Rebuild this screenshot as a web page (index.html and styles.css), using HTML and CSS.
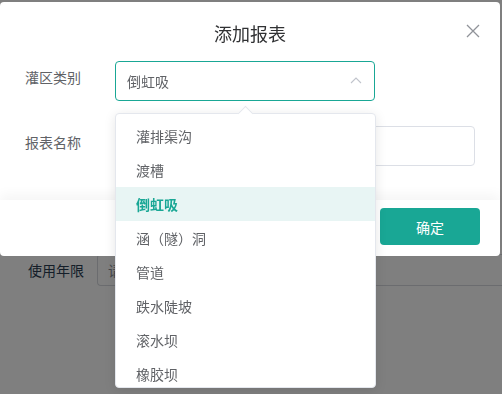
FILE: index.html
```html
<!DOCTYPE html>
<html lang="zh-CN">
<head>
  <meta charset="UTF-8">
  <title>添加报表</title>
  <link rel="stylesheet" href="styles.css">
</head>
<body>

  <div class="page">
    <div class="page-row">
      <label class="page-label">使用年限</label>
      <input class="page-input" type="text" placeholder="请输入使用年限">
    </div>
  </div>

  <div class="mask"></div>

  <div class="dialog">
    <div class="dialog-header">
      <span class="dialog-title">添加报表</span>
      <button class="dialog-close" title="关闭">
        <svg width="14" height="14" viewBox="0 0 14 14">
          <path d="M1 1L13 13M13 1L1 13" stroke="#909399" stroke-width="1.3" fill="none"/>
        </svg>
      </button>
    </div>

    <div class="dialog-body">
      <div class="form-item">
        <label class="form-label">灌区类别</label>
        <div class="select is-open">
          <div class="select-input">
            <span>倒虹吸</span>
            <svg class="select-arrow" width="12" height="8" viewBox="0 0 12 8">
              <path d="M1 7L6 2L11 7" stroke="#c0c4cc" stroke-width="1.1" fill="none"/>
            </svg>
          </div>
          <div class="dropdown">
            <ul class="dropdown-list">
              <li>灌排渠沟</li>
              <li>渡槽</li>
              <li class="selected">倒虹吸</li>
              <li>涵（隧）洞</li>
              <li>管道</li>
              <li>跌水陡坡</li>
              <li>滚水坝</li>
              <li>橡胶坝</li>
            </ul>
          </div>
        </div>
      </div>

      <div class="form-item">
        <label class="form-label">报表名称</label>
        <input class="text-input" type="text">
      </div>
    </div>

    <div class="dialog-footer">
      <button class="btn-primary">确定</button>
    </div>
  </div>

</body>
</html>
```

FILE: styles.css
```css
* { box-sizing: border-box; }

body {
  margin: 0;
  background: #ffffff;
  color: #606266;
  font-family: "Noto Sans CJK SC", "Noto Sans", sans-serif;
  font-size: 14px;
  width: 502px;
  height: 394px;
  overflow: hidden;
}

/* ---------- page behind the mask ---------- */
.page { padding-top: 254px; }
.page-row {
  display: flex;
  align-items: center;
  padding-left: 28px;
}
.page-label {
  width: 69px;
  color: #2a3c52;
}
.page-input {
  flex: 1;
  height: 32px;
  padding: 0 10px;
  border: 1px solid #d6d9de;
  border-right: none;
  border-radius: 4px 0 0 4px;
  font: inherit;
  color: #606266;
}
.page-input::placeholder { color: #8a8d94; }

.mask {
  position: fixed;
  inset: 0;
  background: rgba(0, 0, 0, 0.5);
}

/* ---------- dialog ---------- */
.dialog {
  position: absolute;
  top: 2px;
  left: 0;
  width: 500px;
  height: 254px;
  background: #ffffff;
  border-radius: 4px;
  display: flex;
  flex-direction: column;
}
.dialog-header {
  position: relative;
  height: 59px;
  padding-top: 19px;
  text-align: center;
}
.dialog-title {
  font-size: 18px;
  line-height: 24px;
  color: #303133;
}
.dialog-close {
  position: absolute;
  top: 22px;
  right: 20px;
  padding: 0;
  border: none;
  background: none;
  cursor: pointer;
}

.dialog-body {
  flex: 1;
  padding: 0 25px;
}
.form-item {
  display: flex;
  align-items: flex-start;
  margin-bottom: 25px;
}
.form-label {
  width: 90px;
  line-height: 32px;
  color: #606266;
}

.select { position: relative; width: 260px; }
.select-input {
  height: 40px;
  display: flex;
  align-items: center;
  justify-content: space-between;
  padding: 0 12px 0 11px;
  border: 1px solid #19a795;
  border-radius: 4px;
  color: #606266;
}
.select-arrow { margin-top: -2px; }

.text-input {
  width: 360px;
  height: 40px;
  border: 1px solid #dcdfe6;
  border-radius: 4px;
  font: inherit;
}

/* dropdown floats over the rest of the form */
.dropdown {
  position: absolute;
  top: 52px;
  left: 0;
  width: 261px;
  height: 275px;
  background: #ffffff;
  border: 1px solid #e4e7ed;
  border-radius: 4px;
  box-shadow: 0 2px 12px rgba(0, 0, 0, 0.1);
  z-index: 2;
}
.dropdown::before {
  content: "";
  position: absolute;
  top: -6px;
  left: 124px;
  width: 10px;
  height: 10px;
  background: #ffffff;
  border-top: 1px solid #e4e7ed;
  border-left: 1px solid #e4e7ed;
  transform: rotate(45deg);
}
.dropdown-list {
  list-style: none;
  margin: 0;
  padding: 5px 0;
  height: 100%;
  overflow: hidden;
  border-radius: 4px;
}
.dropdown-list li {
  height: 34px;
  line-height: 34px;
  padding: 0 20px;
  color: #606266;
}
.dropdown-list li.selected {
  background: #e8f5f4;
  color: #19a795;
  font-weight: bold;
}

.dialog-footer {
  height: 56px;
  padding: 8px 20px 0;
  display: flex;
  justify-content: flex-end;
  align-items: flex-start;
  border-radius: 0 0 4px 4px;
  box-shadow: 0 -6px 12px rgba(0, 0, 0, 0.04);
}
.btn-primary {
  width: 100px;
  height: 37px;
  border: none;
  border-radius: 4px;
  background: #19a795;
  color: #ffffff;
  font: inherit;
  cursor: pointer;
}
```
